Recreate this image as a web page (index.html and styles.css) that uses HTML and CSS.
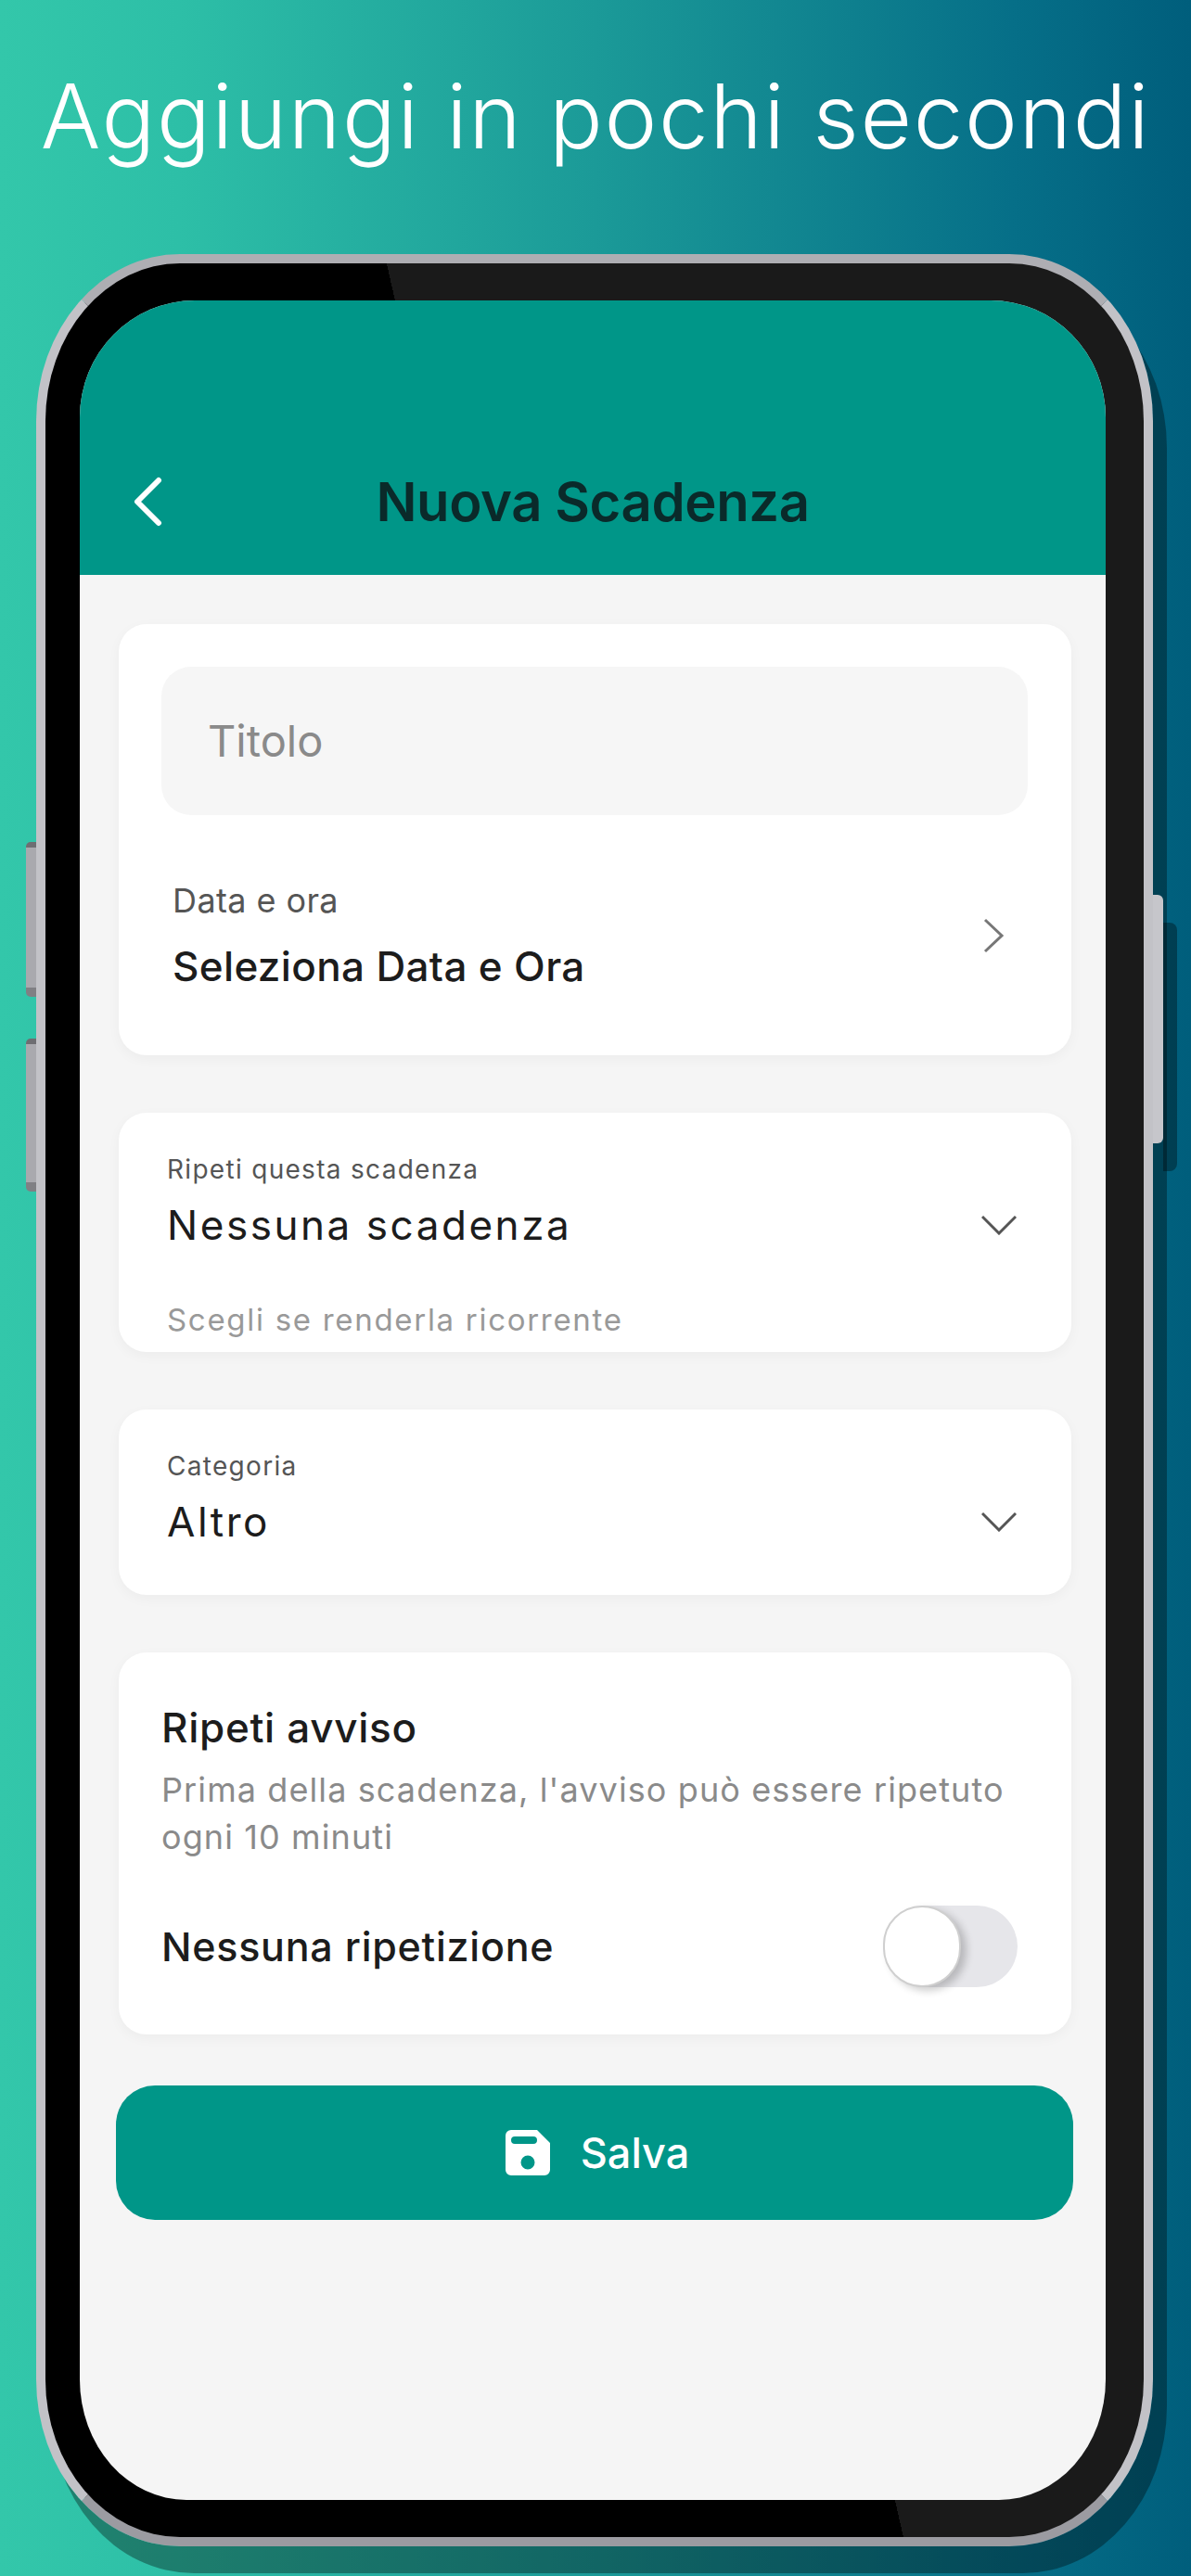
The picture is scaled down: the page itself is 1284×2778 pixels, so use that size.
FILE: index.html
```html
<!DOCTYPE html>
<html lang="it">
<head>
  <meta charset="UTF-8">
  <meta name="viewport" content="width=device-width, initial-scale=1.0">
  <title>Aggiungi in pochi secondi</title>
  <link rel="stylesheet" href="styles.css">
</head>
<body>

  <h1 class="headline">Aggiungi in pochi secondi</h1>

  <div class="phone">
    <span class="side-btn vol-up"></span>
    <span class="side-btn vol-down"></span>
    <span class="power-shadow"></span>
    <span class="power"></span>

    <div class="screen">
      <header class="app-bar">
        <svg class="back" viewBox="0 0 32 54"><path d="M28 4 5 27l23 23"/></svg>
        <div class="app-title">Nuova Scadenza</div>
      </header>

      <main class="content">
        <section class="card date-card">
          <div class="title-input">Titolo</div>
          <div class="date-row">
            <div>
              <div class="date-label">Data e ora</div>
              <div class="date-value">Seleziona Data e Ora</div>
            </div>
            <svg class="chev-right" viewBox="0 0 24 38"><path d="M3 2l18 17L3 36"/></svg>
          </div>
        </section>

        <section class="card select-card recurring">
          <div class="select-row">
            <div>
              <div class="select-label">Ripeti questa scadenza</div>
              <div class="select-value">Nessuna scadenza</div>
            </div>
            <svg class="chev-down" viewBox="0 0 38 22"><path d="M1 2l18 18L37 2"/></svg>
          </div>
          <div class="select-help">Scegli se renderla ricorrente</div>
        </section>

        <section class="card select-card">
          <div class="select-row">
            <div>
              <div class="select-label">Categoria</div>
              <div class="select-value">Altro</div>
            </div>
            <svg class="chev-down" viewBox="0 0 38 22"><path d="M1 2l18 18L37 2"/></svg>
          </div>
        </section>

        <section class="card repeat-card">
          <h2 class="repeat-title">Ripeti avviso</h2>
          <p class="repeat-text">Prima della scadenza, l'avviso può essere ripetuto ogni 10 minuti</p>
          <div class="repeat-row">
            <span class="repeat-label">Nessuna ripetizione</span>
            <span class="toggle"><span class="knob"></span></span>
          </div>
        </section>

        <button class="save">
          <svg class="save-icon" viewBox="0 0 48 49"><path fill-rule="evenodd" d="M6 0h28l14 14v29a6 6 0 0 1-6 6H6a6 6 0 0 1-6-6V6a6 6 0 0 1 6-6zm4 7a3.500 3.500 0 0 0 0 8h20a3.500 3.500 0 0 0 0-8zm14 20.500a7.500 7.500 0 1 0 0 15 7.500 7.500 0 0 0 0-15z"/></svg>
          Salva
        </button>
      </main>
    </div>
  </div>

</body>
</html>
```

FILE: styles.css
```css
* {
  box-sizing: border-box;
}
html, body {
  margin: 0;
  padding: 0;
}
body {
  width: 1284px;
  height: 2778px;
  overflow: hidden;
  font-family: Inter, "Noto Sans", sans-serif;
  background: linear-gradient(90deg, #33c7aa 0%, #2dbfa7 15%, #1b9a98 50%, #066f88 85%, #005e7c 100%);
}

.headline {
  margin: 0;
  padding-top: 75px;
  height: 178px;
  font-size: 96px;
  line-height: 100px;
  font-weight: 350;
  letter-spacing: 1.65px;
  color: #fff;
  text-align: center;
  white-space: nowrap;
}

/* phone */
.phone {
  position: relative;
  width: 1204px;
  height: 2472px;
  margin: 96px 0 0 39px;
  padding: 40px 41px 40px 37px;
  border: 10px solid #c2c2c7;
  border-top-color: #aeaeb3;
  border-bottom-color: #9b9ba1;
  border-radius: 155px / 180px;
  background: linear-gradient(77.2deg, #000 calc(50% + 53px), #1a1a1a calc(50% + 53px));
  box-shadow: 15px 29px 0 rgba(0, 0, 0, 0.34);
}
.side-btn {
  position: absolute;
  left: -21px;
  width: 11px;
  border-radius: 5px 0 0 5px;
  background: #a9a9ae;
  border-top: 6px solid #6e6e72;
  border-bottom: 10px solid #808084;
}
.vol-up {
  top: 624px;
  height: 167px;
}
.vol-down {
  top: 836px;
  height: 165px;
}
.power {
  position: absolute;
  right: -21px;
  top: 681px;
  width: 11px;
  height: 268px;
  border-radius: 0 6px 6px 0;
  background: #c6c6cb;
}
.power-shadow {
  position: absolute;
  right: -36px;
  top: 711px;
  width: 15px;
  height: 268px;
  border-radius: 0 8px 8px 0;
  background: rgba(0, 0, 0, 0.34);
}

.screen {
  width: 1106px;
  height: 2372px;
  overflow: hidden;
  background: #f5f5f5;
  border-radius: 124px 124px 115px 115px / 126px 126px 130px 130px;
}

/* top bar */
.app-bar {
  display: grid;
  grid-template-columns: 1fr auto 1fr;
  align-items: center;
  height: 296px;
  padding: 186px 57px 48px 57px;
  background: #009688;
}
.back {
  width: 32px;
  height: 54px;
  fill: none;
  stroke: #fff;
  stroke-width: 6;
  stroke-linecap: round;
  stroke-linejoin: round;
}
.app-title {
  font-size: 58px;
  line-height: 62px;
  font-weight: 600;
  letter-spacing: -0.4px;
  color: #0a2a2a;
}

/* form */
.content {
  padding: 53px 37px 0 42px;
}
.card {
  background: #fff;
  border-radius: 30px;
  box-shadow: 0 4px 14px rgba(0, 0, 0, 0.04);
  margin-bottom: 62px;
}

.date-card {
  padding: 46px 47px 71px 46px;
}
.title-input {
  height: 160px;
  padding: 0 50px;
  border-radius: 32px;
  background: #f6f6f6;
  color: #8a8a8a;
  font-size: 47px;
  line-height: 160px;
}
.date-row {
  display: flex;
  justify-content: space-between;
  align-items: center;
  margin-top: 72px;
  padding: 0 25px 0 12px;
}
.date-label {
  font-size: 36px;
  line-height: 40px;
  letter-spacing: 0.4px;
  color: #555;
}
.date-value {
  margin-top: 26px;
  font-size: 44px;
  line-height: 50px;
  font-weight: 500;
  letter-spacing: 0.35px;
  color: #1c1c1c;
}
.chev-right {
  width: 24px;
  height: 38px;
  fill: none;
  stroke: #777;
  stroke-width: 3;
}

.select-card {
  padding: 43px 59px 52px 52px;
}
.select-card.recurring {
  padding-bottom: 15px;
}
.select-row {
  display: flex;
  justify-content: space-between;
  align-items: flex-end;
}
.select-label {
  font-size: 28px;
  line-height: 36px;
  letter-spacing: 1.3px;
  color: #555;
}
.select-value {
  margin-top: 15px;
  font-size: 44px;
  line-height: 54px;
  font-weight: 400;
  letter-spacing: 2.55px;
  color: #1c1c1c;
}
.chev-down {
  width: 38px;
  height: 22px;
  margin-bottom: 16px;
  fill: none;
  stroke: #555;
  stroke-width: 3;
}
.select-help {
  margin-top: 55px;
  font-size: 33px;
  line-height: 40px;
  letter-spacing: 1.7px;
  color: #999;
}

.repeat-card {
  padding: 54px 58px 51px 46px;
  margin-bottom: 55px;
}
.repeat-title {
  margin: 0;
  font-size: 44px;
  line-height: 54px;
  font-weight: 550;
  letter-spacing: 0.7px;
  color: #1c1c1c;
}
.repeat-text {
  margin: 15px 0 0;
  font-size: 36px;
  line-height: 51px;
  letter-spacing: 1.1px;
  color: #8a8a8a;
}
.repeat-row {
  display: flex;
  justify-content: space-between;
  align-items: center;
  margin-top: 48px;
}
.repeat-label {
  font-size: 43px;
  font-weight: 450;
  letter-spacing: 0.75px;
  color: #1c1c1c;
}
.toggle {
  display: flex;
  width: 145px;
  height: 88px;
  border-radius: 44px;
  background: #e6e6ea;
}
.knob {
  width: 84px;
  height: 88px;
  border-radius: 44px;
  background: #fff;
  border: 2px solid #cfcfcf;
  box-shadow: 6px 4px 8px rgba(0, 0, 0, 0.2);
}

.save {
  display: flex;
  justify-content: center;
  align-items: center;
  gap: 33px;
  width: 1032px;
  height: 145px;
  margin-left: -3px;
  padding: 0 0 0 6px;
  border: 0;
  border-radius: 42px;
  background: #009688;
  color: #fff;
  font-family: inherit;
  font-size: 45px;
  font-weight: 500;
}
.save-icon {
  width: 48px;
  height: 49px;
  fill: #fff;
}
```
